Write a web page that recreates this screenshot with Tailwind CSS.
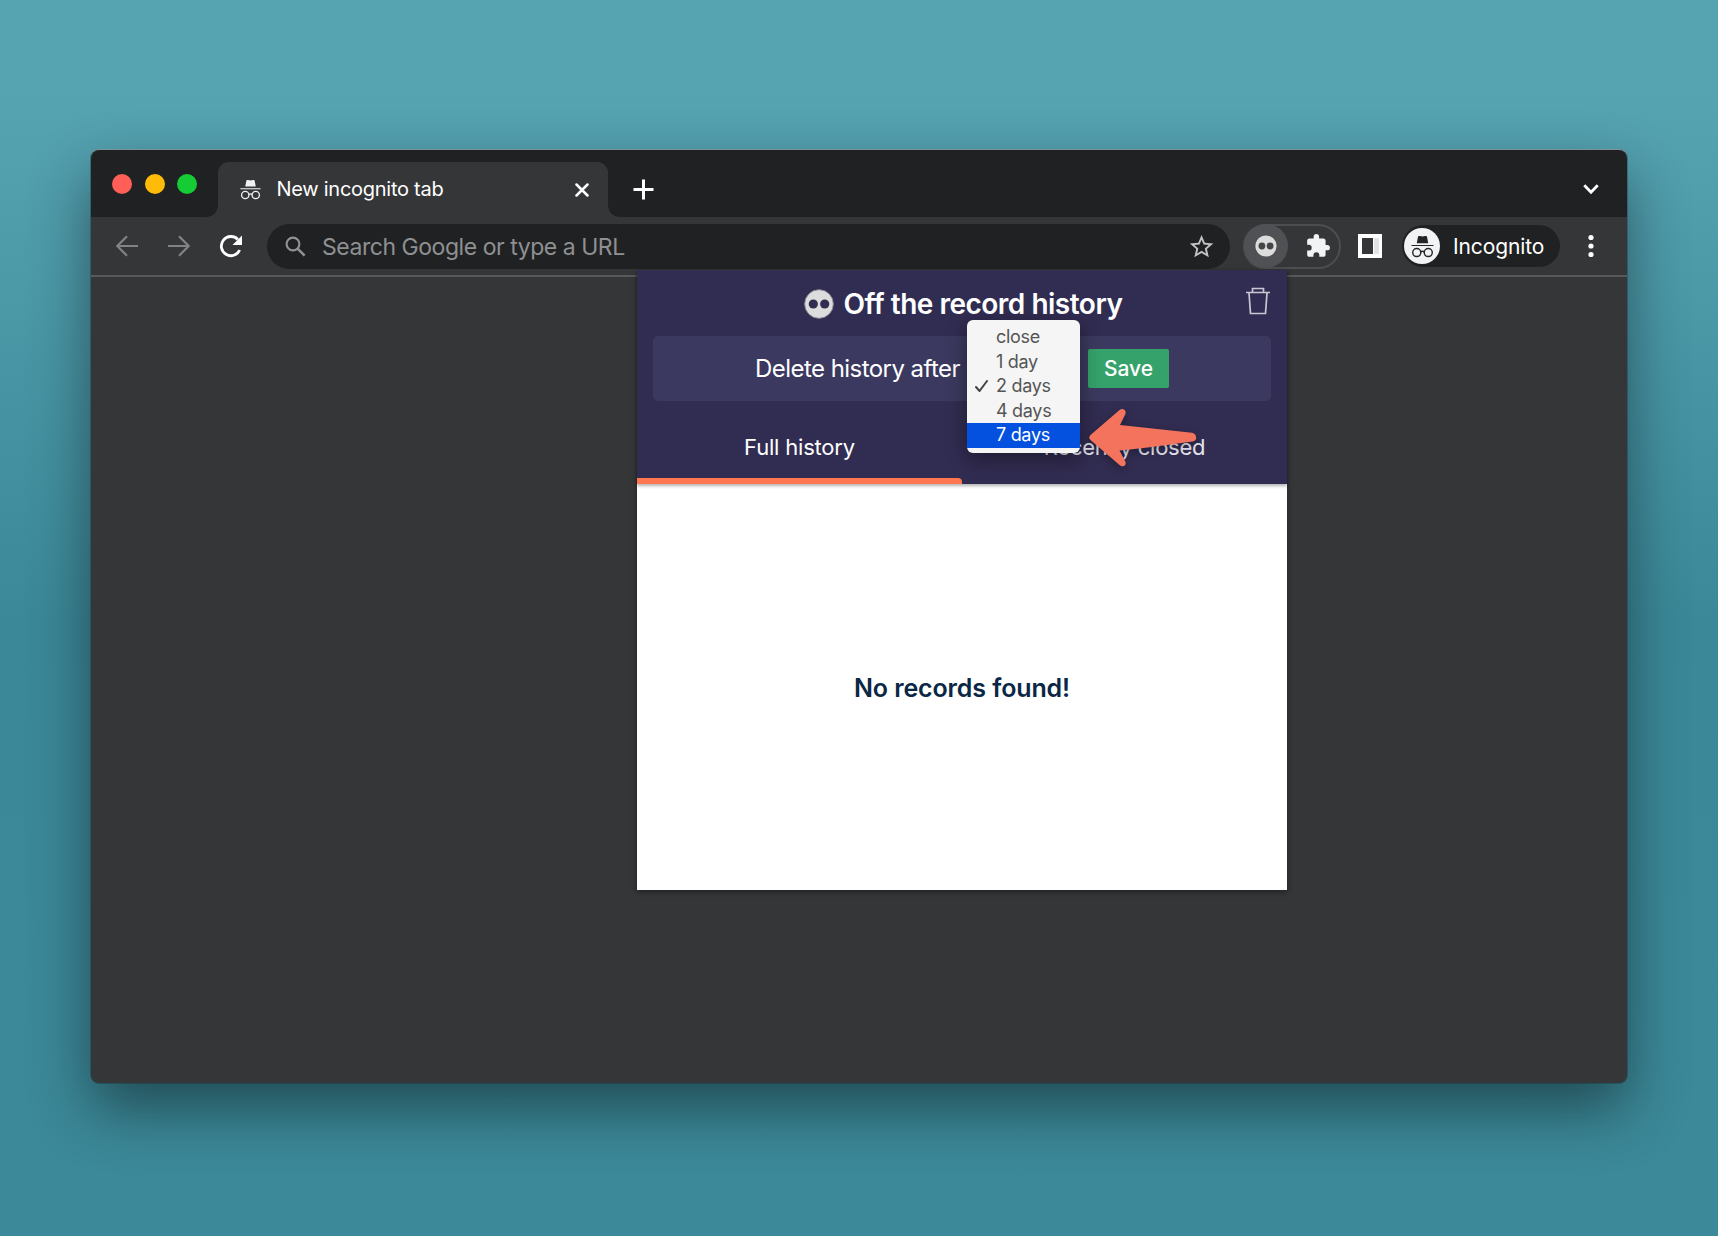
<!DOCTYPE html>
<html lang="en">
<head>
<meta charset="utf-8">
<title>Off the record history</title>
<script src="https://cdn.jsdelivr.net/npm/@tailwindcss/browser@4"></script>
</head>
<body class="w-[1718px] h-[1236px] overflow-hidden bg-[linear-gradient(180deg,#56a3b2_0px,#56a3b2_90px,#3b8898_620px,#3c8999_1236px)] font-['Inter',sans-serif] pt-[150px] pl-[91px]">
<svg class="hidden">
  <symbol id="spy" viewBox="0 0 24 24">
    <path fill="currentColor" d="M8.3 1h1.100l2.600.6 2.600-.6h1.100c.5 0 .9.3 1 .8L18 8.500H6l1.300-6.700c.1-.5.5-.8 1-.8zM.5 10.500h23v1.100H.5z"/>
    <g fill="none" stroke="currentColor" stroke-width="1.500"><circle cx="6" cy="18.300" r="4.200"/><circle cx="18" cy="18.300" r="4.200"/><path d="M10 17.800c1-.8 3-.8 4 0"/></g>
  </symbol>
</svg>
<main class="relative w-[1536px] h-[933px] rounded-[8px] bg-[#353638] shadow-[0_0_0_1px_rgba(20,50,58,0.35),0_26px_60px_rgba(0,0,0,0.45)]">
  <!-- Tab strip -->
  <header class="flex h-[67px] rounded-t-[8px] bg-[#202123] shadow-[0_-1px_0_#7d9297]">
    <div class="flex w-[127px] gap-[12.500px] pl-[21px] pt-6">
      <span class="size-5 rounded-full bg-[#ff5f57]"></span>
      <span class="size-5 rounded-full bg-[#febc09]"></span>
      <span class="size-5 rounded-full bg-[#15cc35]"></span>
    </div>
    <div class="relative mt-3 flex h-[55px] w-[390px] items-center rounded-t-[11px] bg-[#353638] pl-[22px]">
      <span class="absolute -left-[11px] bottom-0 size-[11px] bg-[radial-gradient(circle_at_0_0,transparent_10.5px,#353638_11px)]"></span>
      <span class="absolute -right-[11px] bottom-0 size-[11px] bg-[radial-gradient(circle_at_100%_0,transparent_10.5px,#353638_11px)]"></span>
      <svg class="size-[21px] text-[#f1f1f1]"><use href="#spy"/></svg>
      <span class="ml-[15.500px] w-[298px] pb-[2px] text-[20px] leading-7 text-white tracking-[-0.27px]">New incognito tab</span>
      <svg class="size-[14px]" viewBox="0 0 14 14"><path d="M1.500 1.500l11 11M12.500 1.500l-11 11" stroke="#fff" stroke-width="2.500" stroke-linecap="round"/></svg>
    </div>
    <svg class="ml-[25px] mt-[29px] size-[21px]" viewBox="0 0 21 21"><path d="M10.500.5v20M.5 10.500h20" stroke="#fff" stroke-width="3"/></svg>
    <svg class="ml-auto mr-[28px] mt-[34px] h-[11px] w-[16px]" viewBox="0 0 16 11"><path d="M1.300 1.300L8 8.300l6.700-7" fill="none" stroke="#fff" stroke-width="2.800"/></svg>
  </header>
  <!-- Toolbar -->
  <nav class="flex h-[60px] items-center border-b-2 border-[#58595b]">
    <svg class="ml-[25px] size-[22px]" viewBox="0 0 22 22"><path d="M22 11H1.500M11 1.200L1.300 11l9.700 9.800" fill="none" stroke="#828385" stroke-width="2.200"/></svg>
    <svg class="ml-[30px] size-[22px]" viewBox="0 0 22 22"><path d="M0 11h20.500M11 1.200l9.700 9.800-9.700 9.800" fill="none" stroke="#828385" stroke-width="2.200"/></svg>
    <svg class="ml-[29px] size-[24px]" viewBox="0 0 24 24"><path d="M20.700 16A9.600 9.600 0 1 1 18.800 5.400" fill="none" stroke="#fff" stroke-width="2.800"/><path d="M23 1.500v9.500H13.500z" fill="#fff"/></svg>
    <div class="ml-[24px] flex h-[45px] w-[963px] items-center rounded-full bg-[#202123] pl-[18px]">
      <svg class="size-[21px]" viewBox="0 0 21 21"><circle cx="8" cy="8" r="6.400" fill="none" stroke="#919294" stroke-width="2.100"/><path d="M12.600 12.600l7 7" stroke="#919294" stroke-width="2.500"/></svg>
      <span class="ml-4 pt-px text-[23px] leading-8 text-[#8f9092] tracking-[-0.46px]">Search Google or type a URL</span>
      <svg class="ml-auto mr-4 size-[25px]" viewBox="0 0 24 24"><path fill="#c3c4c6" d="M22 9.240l-7.190-.62L12 2 9.190 8.630 2 9.240l5.460 4.730L5.820 21 12 17.270 18.180 21l-1.630-7.030L22 9.240zM12 15.400l-3.760 2.270 1-4.280-3.320-2.880 4.380-.38L12 6.100l1.710 4.040 4.380.38-3.320 2.880 1 4.280L12 15.400z" transform="translate(-1.500 -1.300) scale(1.130)"/></svg>
    </div>
    <div class="ml-[13px] flex h-[45px] w-[98px] items-center rounded-full border-2 border-[#4d4e50]">
      <span class="-ml-px flex size-[44px] items-center justify-center rounded-full bg-[#505154]">
        <svg class="size-[22px]" viewBox="0 0 22 22"><circle cx="11" cy="11" r="10.600" fill="#dcdcdc"/><circle cx="6.900" cy="11" r="3.400" fill="#444547"/><circle cx="15.100" cy="11" r="3.400" fill="#444547"/></svg>
      </span>
      <svg class="ml-[17px] size-[26px]" viewBox="0 0 24 24"><path fill="#f1f3f4" d="M20.500 11H19V7c0-1.100-.9-2-2-2h-4V3.500a2.500 2.500 0 0 0-5 0V5H4c-1.100 0-2 .9-2 2v3.800h1.500a2.700 2.700 0 0 1 0 5.400H2V20c0 1.100.9 2 2 2h3.800v-1.500a2.700 2.700 0 0 1 5.400 0V22H17c1.100 0 2-.9 2-2v-4h1.500a2.500 2.500 0 0 0 0-5z"/></svg>
    </div>
    <svg class="ml-[17px] size-[24px]" viewBox="0 0 24 24"><path fill="#fff" fill-rule="evenodd" d="M0 0h24v24H0zM4 4v16h11V4z"/><path fill="#e3e4e6" d="M16 4h5v16h-5z"/></svg>
    <div class="ml-5 flex h-[42px] w-[158px] items-center rounded-full bg-[#202123] pl-[2px]">
      <span class="flex size-[36px] items-center justify-center rounded-full bg-[#f1f3f4]"><svg class="size-[23px] text-[#242527]"><use href="#spy"/></svg></span>
      <span class="ml-[13px] pt-[2px] text-[21px] leading-7 text-white tracking-[-0.1px]">Incognito</span>
    </div>
    <svg class="ml-[28px] h-[24px] w-[6px]" viewBox="0 0 6 24"><g fill="#fff"><circle cx="3" cy="3.500" r="2.600"/><circle cx="3" cy="12" r="2.600"/><circle cx="3" cy="20.500" r="2.600"/></g></svg>
  </nav>

  <!-- Extension popup -->
  <section class="absolute left-[546px] top-[120px] flex h-[620px] w-[650px] flex-col bg-white shadow-[0_2px_6px_rgba(0,0,0,0.4)]">
    <div class="flex h-[213.500px] flex-col bg-[#312c51] shadow-[0_2px_3px_rgba(0,0,0,0.3)]">
      <div class="flex h-[66px] items-center justify-center pl-[2px] pt-px">
        <svg class="size-[30px]" viewBox="0 0 30 30"><circle cx="15" cy="15" r="14.300" fill="#dcdcdc" stroke="#8d8b96" stroke-width="1"/><circle cx="9.300" cy="15" r="4.600" fill="#312c51"/><circle cx="20.700" cy="15" r="4.600" fill="#312c51"/></svg>
        <h1 class="ml-[10px] text-[28px] font-semibold leading-9 text-white tracking-[-0.5px]">Off the record history</h1>
      </div>
      <div class="mx-4 flex h-[65px] items-center rounded-[5px] bg-[#3b395f] pl-[102px]">
        <span class="w-[333px] pt-px text-[24px] leading-8 text-white tracking-[-0.55px]">Delete history after</span>
        <button class="h-[39px] w-[81px] rounded-[2px] bg-[#34a26a] text-[21px] font-medium text-white">Save</button>
      </div>
      <div class="grid flex-1 grid-cols-2 text-center text-[22px] text-white tracking-[-0.2px]">
        <div class="flex flex-col justify-end"><span class="mb-[15px] leading-8">Full history</span><span class="h-[6px] rounded-tr-[4px] bg-[#ff7752]"></span></div>
        <div class="flex flex-col justify-end"><span class="mb-[21px] leading-8 text-[#e6e5ee] tracking-[-0.25px]">Recently closed</span></div>
      </div>
    </div>
    <div class="flex flex-1 items-center justify-center pt-[3px] text-[25px] font-semibold text-[#0a2746] tracking-[-0.12px]">No records found!</div>
    <svg class="absolute left-[608px] top-[17px] h-[28px] w-[26px]" viewBox="0 0 26 28" fill="none" stroke="#c9c8d2" stroke-width="1.700"><path d="M1 5.500h24M7.500 5V1.500h11V5M4 6l1.500 20.500h15L22 6"/></svg>
    <!-- Retention menu -->
    <ul class="absolute left-[330px] top-[49.500px] h-[133px] w-[112.500px] overflow-hidden rounded-[6px] bg-[#f5f5f5] pt-[5.500px] text-[18px] leading-[24.500px] text-[#555] tracking-[-0.3px] shadow-[0_6px_20px_rgba(0,0,0,0.4)]">
      <li class="pl-[29px]">close</li>
      <li class="pl-[29px]">1 day</li>
      <li class="flex items-center pl-2"><svg class="mr-[8px] h-[12px] w-[13px]" viewBox="0 0 13 12"><path d="M1 7l3.500 4L12 1" fill="none" stroke="#444" stroke-width="2" stroke-linecap="round"/></svg>2 days</li>
      <li class="pl-[29px]">4 days</li>
      <li class="bg-[#0451df] pl-[29px] text-white">7 days</li>
    </ul>
    <!-- Pointer arrow -->
    <svg class="absolute left-[448px] top-[136px] h-[66px] w-[116px] drop-shadow-[0_3px_4px_rgba(0,0,0,0.3)]" viewBox="0 0 116 66"><path d="M5.500 29L34.500 4C38 1.500 42 4.500 40.200 8.500L35 19L107 26.800C112.500 27.800 112.500 35 107.500 35.600C82 39 62 42 34.500 44.500L40.300 55.500C42 59.500 38 62 34.500 59L5.500 34Q3 31.500 5.500 29Z" fill="#f3735c"/></svg>
  </section>
</main>
</body>
</html>
